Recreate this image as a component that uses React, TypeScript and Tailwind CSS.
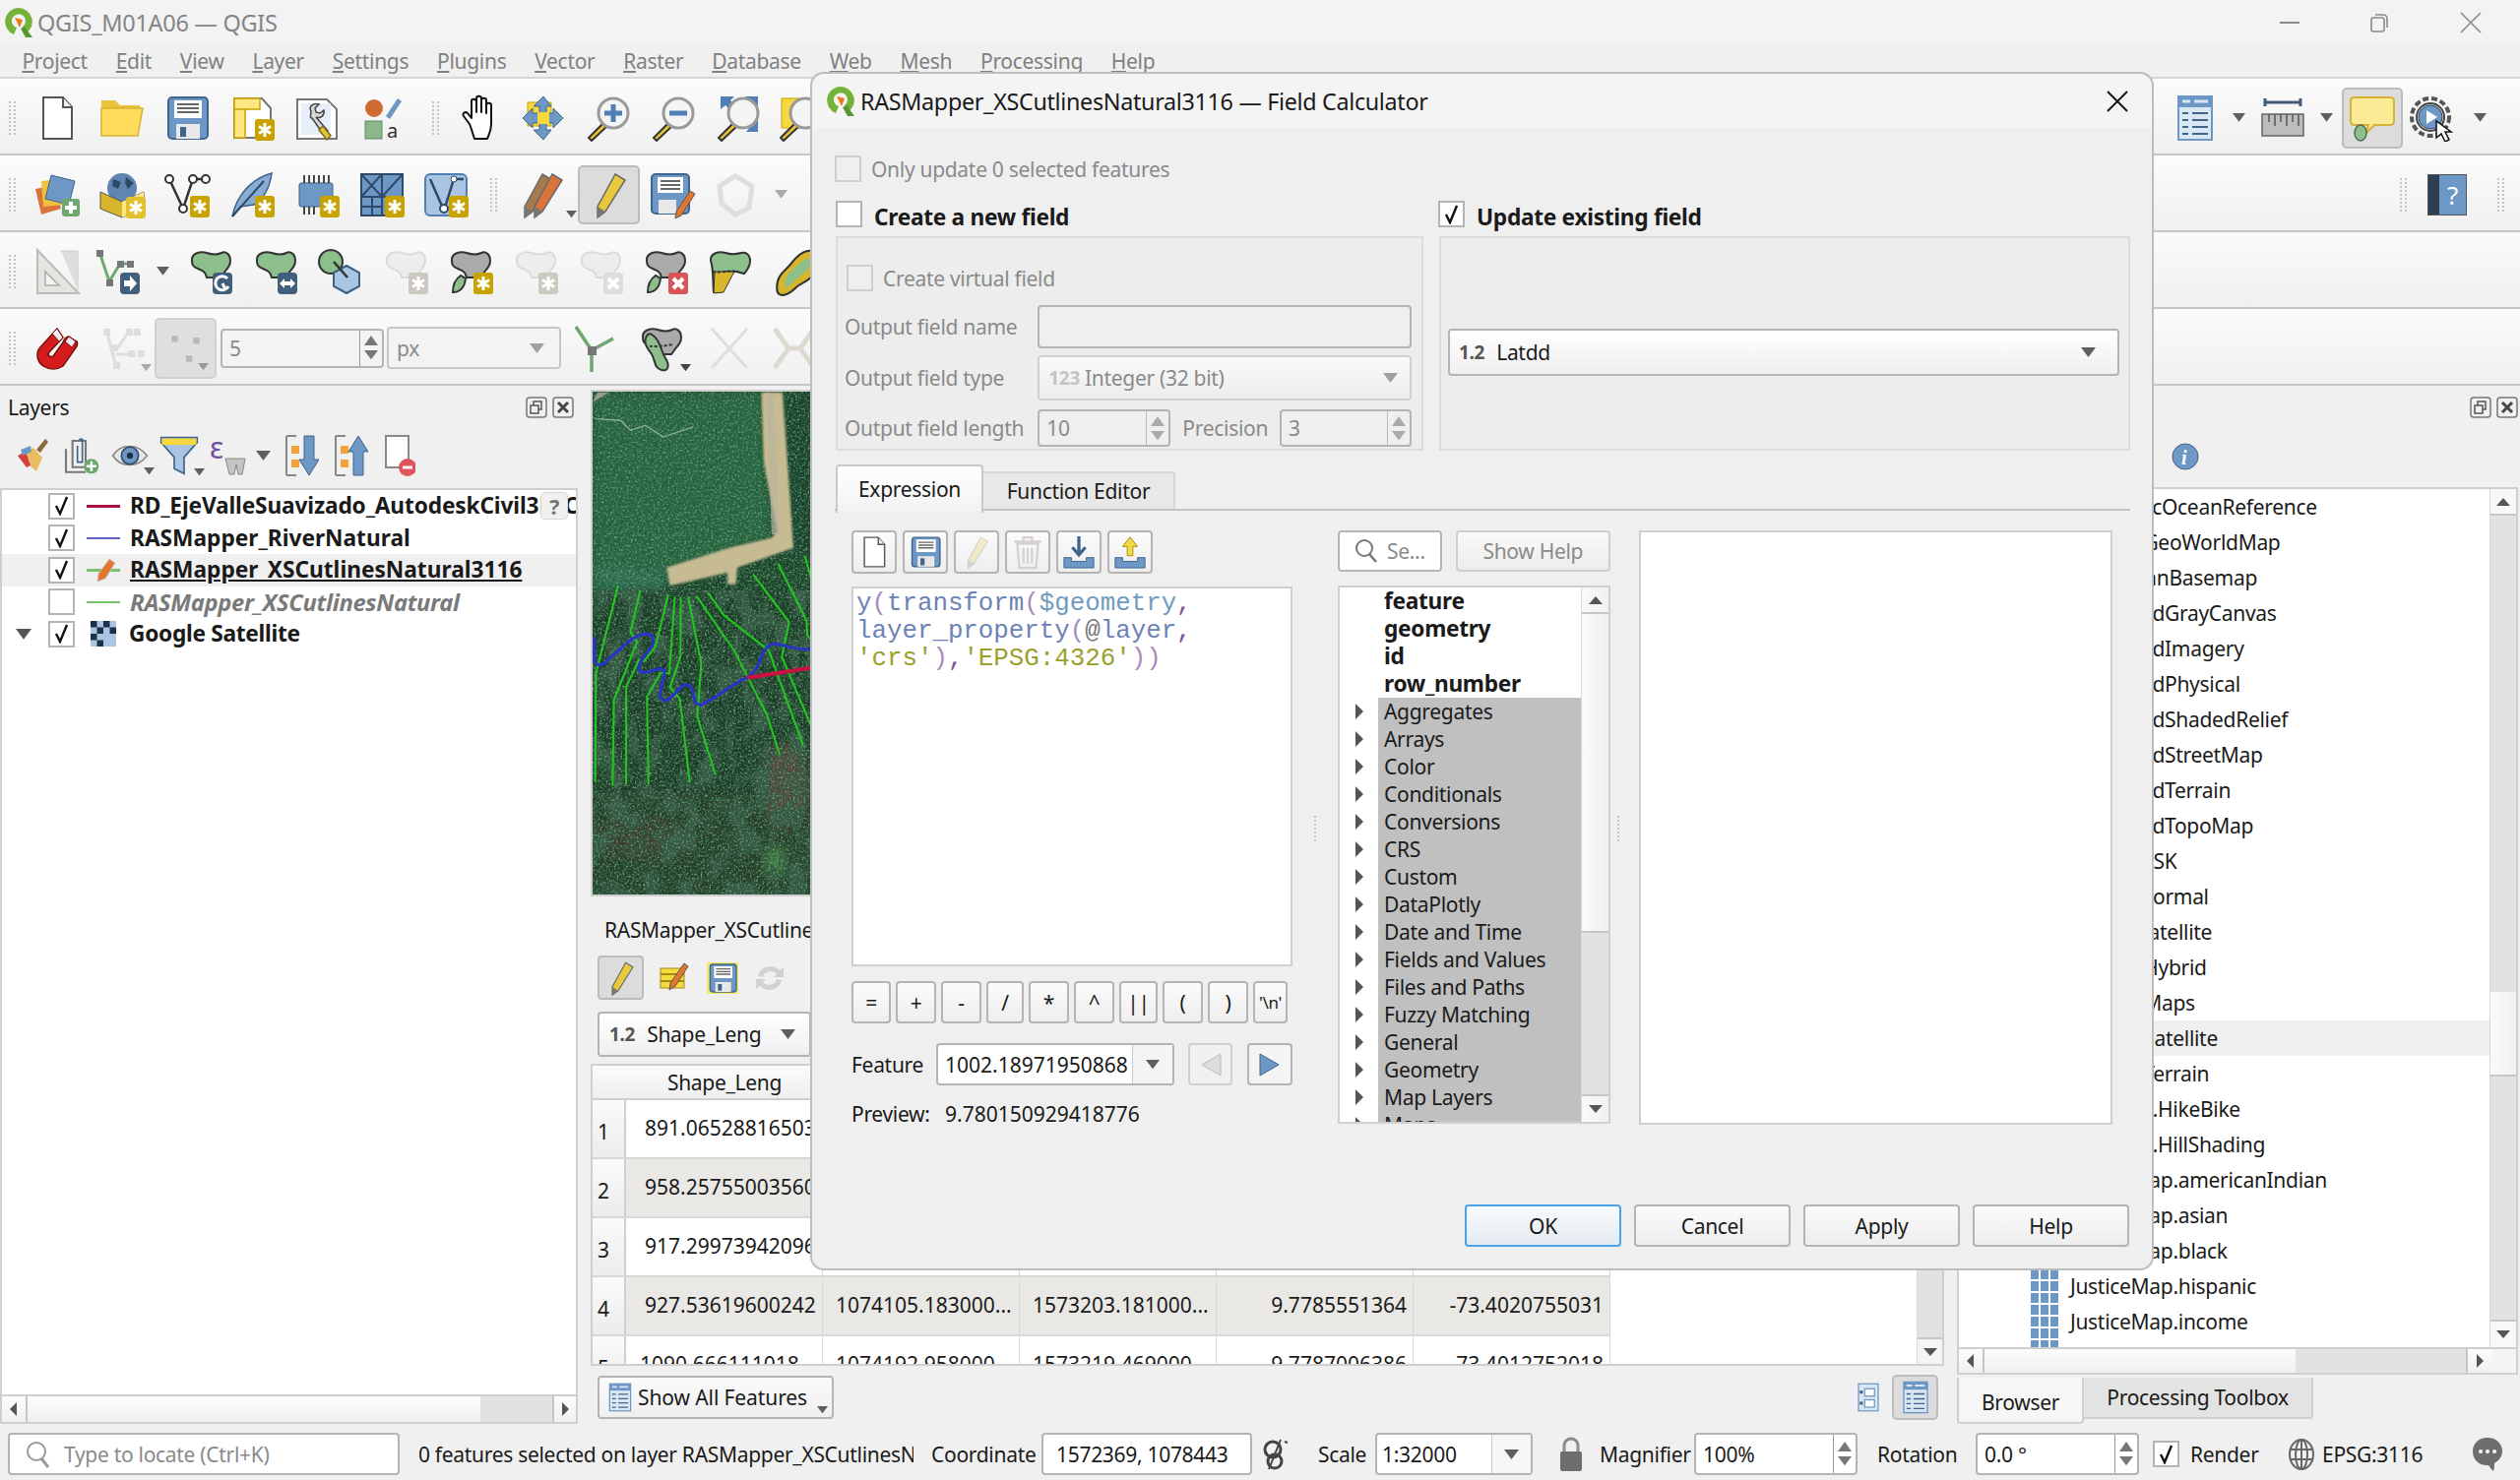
import React from "react";

// ---------- small drawing helpers ----------
const Ico = ({ children, size = 48, className = "" }: { children: React.ReactNode; size?: number; className?: string }) => (
  <svg viewBox="0 0 48 48" width={size} height={size} className={className}>
    {children}
  </svg>
);

const Caret = ({ c = "#5f5f5f", w = 13 }: { c?: string; w?: number }) => (
  <svg viewBox="0 0 12 8" width={w} height={(w * 8) / 12}>
    <path d="M0 0h12L6 8z" fill={c} />
  </svg>
);

const Star = ({ x = 27, y = 25, c = "#c8a200" }: { x?: number; y?: number; c?: string }) => (
  <g>
    <rect x={x} y={y} width="20" height="22" rx="3" fill={c} />
    <path
      d={`M${x + 10} ${y + 4}v14M${x + 4} ${y + 7.5}l12 7M${x + 16} ${y + 7.5}l-12 7`}
      stroke="#fff"
      strokeWidth="3"
    />
  </g>
);

const BLOB = "M5 13c-1-8 9-10 15-8s11 2 15 0 9 1 9 8-5 9-7 13l-3 4H20c-1-6-4-7-9-9s-6-4-6-8z";

const Blob = ({ fill = "#8dbf8d", stroke = "#333" }: { fill?: string; stroke?: string }) => (
  <path d={BLOB} fill={fill} stroke={stroke} strokeWidth="2" />
);

const DarkBadge = ({ c = "#3f5f7c", children }: { c?: string; children: React.ReactNode }) => (
  <g>
    <rect x="26" y="25" width="20" height="22" rx="4" fill={c} />
    {children}
  </g>
);

const IconNew = () => (
  <Ico>
    <path d="M10 3h20l9 10v32H10z" fill="#fff" stroke="#555" strokeWidth="2" />
    <path d="M30 3v10h9" fill="#eee" stroke="#555" strokeWidth="2" />
  </Ico>
);
const IconOpen = () => (
  <Ico>
    <path d="M3 6h14l5 5h20v6H3z" fill="#e8c23a" />
    <path d="M3 14h42l-5 28H3z" fill="#ffdc5c" stroke="#d6b236" strokeWidth="1.5" />
  </Ico>
);
const IconSave = ({ size = 48 }: { size?: number }) => (
  <Ico size={size}>
    <rect x="5" y="3" width="40" height="42" rx="4" fill="#6d97c4" stroke="#41648a" strokeWidth="2" />
    <rect x="11" y="6" width="28" height="18" fill="#fff" />
    <path d="M14 10h22M14 14h22M14 18h22" stroke="#666" strokeWidth="2" />
    <rect x="13" y="30" width="24" height="15" fill="#e8e8e8" />
    <rect x="17" y="33" width="6" height="10" fill="#41648a" />
  </Ico>
);
const IconPrint = () => (
  <Ico>
    <path d="M6 4h28l9 10v30H6z" fill="#fff" stroke="#777" strokeWidth="2" />
    <rect x="6" y="4" width="11" height="40" fill="#ffe680" stroke="#c8a200" strokeWidth="1.5" />
    <rect x="6" y="4" width="26" height="11" fill="#ffe680" stroke="#c8a200" strokeWidth="1.5" />
    <Star />
  </Ico>
);
const IconLayoutMgr = () => (
  <Ico>
    <path d="M4 5h30l10 10v30H4z" fill="#fff" stroke="#777" strokeWidth="2" />
    <rect x="8" y="9" width="30" height="32" fill="#e6effa" />
    <path d="M18 17c-3-5 3-9 8-7l-4 4 1 4 4 1 4-3c1 5-3 9-8 7l12 14-4 4-12-17c-3 0-1-3-1-7z" fill="#d8d8d8" stroke="#444" strokeWidth="1.5" />
    <path d="M30 32l8 10-4 4-8-10z" fill="#e3c33c" stroke="#806c10" strokeWidth="1.5" />
  </Ico>
);
const IconStyle = () => (
  <Ico>
    <circle cx="16" cy="14" r="9" fill="#cf6a34" />
    <path d="M28 22L40 4l4 3-12 18z" fill="#6d97c4" />
    <rect x="7" y="27" width="17" height="18" fill="#8bb78b" stroke="#5e8b5e" />
    <text x="29" y="44" fontSize="20" fill="#333" fontFamily="Noto Sans, sans-serif">
      a
    </text>
  </Ico>
);
const IconHand = () => (
  <Ico>
    <path
      d="M15 30L9 22c-2-3 2-5 4-3l4 5V7c0-3 4-3 5 0v11V4c0-3 5-3 5 0v14V6c0-3 5-3 5 0v13-8c0-3 5-3 5 0v19c0 7-2 10-4 15H20c-2-6-3-10-5-15z"
      fill="#fff"
      stroke="#111"
      strokeWidth="2"
      strokeLinejoin="round"
    />
  </Ico>
);
const IconPan = () => (
  <Ico>
    <rect x="8" y="8" width="24" height="24" fill="#f5d93f" stroke="#c8a200" />
    <path d="M24 2l8 10h-5v7h7v-5l10 10-10 10v-5h-7v7h5L24 46 14 36h6v-7h-7v5L3 24l10-10v5h7v-7h-6z" fill="#6d97c4" stroke="#41648a" />
    <rect x="18" y="18" width="12" height="12" fill="#f5d93f" />
  </Ico>
);
const Mag = ({ children }: { children?: React.ReactNode }) => (
  <>
    <path d="M19 29L4 44l3 3 15-14z" fill="#e8c23a" stroke="#333" strokeWidth="2" />
    <circle cx="29" cy="19" r="15" fill="#f4f4f4" stroke="#9a9a9a" strokeWidth="3" />
    {children}
  </>
);
const IconZoomIn = () => (
  <Ico>
    <Mag>
      <path d="M29 10v18M20 19h18" stroke="#4f7fb5" strokeWidth="5" />
    </Mag>
  </Ico>
);
const IconZoomOut = () => (
  <Ico>
    <Mag>
      <path d="M20 19h18" stroke="#4f7fb5" strokeWidth="5" />
    </Mag>
  </Ico>
);
const IconZoomFull = () => (
  <Ico>
    <path d="M6 2h14l-4 4 6 6-5 5-6-6-5 4zM44 2v14l-4-4-6 6-5-5 6-6-4-5zM44 38V24l-3 3-6-5-5 5 6 6-4 5z" fill="#4f7fb5" />
    <Mag />
  </Ico>
);
const IconZoomSel = () => (
  <Ico>
    <rect x="5" y="4" width="30" height="30" fill="#f5d93f" stroke="#c8a200" />
    <Mag />
  </Ico>
);

const IconAddLayers = () => (
  <Ico>
    <path d="M2 18l20-4 6 24-20 6z" fill="#d9743c" />
    <path d="M8 10l20-2 2 26-20 2z" fill="#f0c23c" />
    <path d="M18 4l24 6-6 24-24-6z" fill="#6d97c4" stroke="#41648a" />
    <rect x="29" y="28" width="18" height="18" rx="3" fill="#6ea86e" />
    <path d="M38 31v12M32 37h12" stroke="#fff" strokeWidth="4" />
  </Ico>
);
const IconGeoPkg = () => (
  <Ico>
    <circle cx="24" cy="17" r="15" fill="#5f86b0" />
    <path d="M15 8l8 3-3 7-6-3zM28 6l8 6-6 6-3-6z" fill="#2f4a68" />
    <path d="M2 21l22 10 22-10v17L24 47 2 38z" fill="#d8b62c" stroke="#555" />
    <path d="M24 31l22-10v17L24 47z" fill="#ffe680" />
    <Star x={28} y={26} c="#e2c12f" />
  </Ico>
);
const IconVector = () => (
  <Ico>
    <path d="M6 8l14 30L30 8h12" fill="none" stroke="#333" strokeWidth="2.5" />
    <circle cx="6" cy="8" r="4" fill="#fff" stroke="#333" strokeWidth="2" />
    <circle cx="20" cy="38" r="4" fill="#fff" stroke="#333" strokeWidth="2" />
    <circle cx="30" cy="8" r="4" fill="#fff" stroke="#333" strokeWidth="2" />
    <circle cx="43" cy="8" r="4" fill="#fff" stroke="#333" strokeWidth="2" />
    <Star />
  </Ico>
);
const IconFeather = () => (
  <Ico>
    <path d="M4 46C8 26 22 8 44 2c-2 14-8 26-18 32l-14 2z" fill="#88add4" stroke="#3d5f85" strokeWidth="1.5" />
    <path d="M4 46L36 10" stroke="#2f4a68" strokeWidth="2" />
    <Star />
  </Ico>
);
const IconChip = () => (
  <Ico>
    <rect x="6" y="12" width="34" height="24" rx="2" fill="#6d97c4" stroke="#3d5f85" />
    <path d="M11 4v8M16 4v8M21 4v8M26 4v8M31 4v8M36 4v8M11 36v8M16 36v8M21 36v8" stroke="#333" strokeWidth="1.8" />
    <Star />
  </Ico>
);
const IconMesh = () => (
  <Ico>
    <rect x="3" y="3" width="42" height="42" fill="#6d97c4" stroke="#2f4a68" strokeWidth="2" />
    <path d="M3 26h42M24 3v42M3 3l21 23M24 3L3 26M24 26l21-23M14 26v19M3 36h21" stroke="#2f4a68" strokeWidth="2" />
    <Star />
  </Ico>
);
const IconVBox = () => (
  <Ico>
    <rect x="3" y="3" width="42" height="42" rx="5" fill="#a9c5e3" stroke="#4f7fb5" strokeWidth="2" />
    <path d="M8 8l14 32L32 8h10" fill="none" stroke="#2f4a68" strokeWidth="2.5" />
    <circle cx="22" cy="38" r="4" fill="#fff" stroke="#2f4a68" strokeWidth="2" />
    <circle cx="32" cy="8" r="3" fill="#fff" stroke="#2f4a68" />
    <Star />
  </Ico>
);
const PencilShape = ({ c = "#e8c83c", tx = 0 }: { c?: string; tx?: number }) => (
  <g transform={`translate(${tx} 0)`}>
    <path d="M30 3l10 6-20 32-8 6 0-11z" fill={c} stroke="#6a6a6a" strokeWidth="1.5" />
    <path d="M12 36l8 5-8 6z" fill="#777" />
  </g>
);
const IconPencils = () => (
  <Ico>
    <PencilShape c="#a67a4f" tx={-8} />
    <PencilShape c="#d9743c" tx={2} />
  </Ico>
);
const IconPencil = ({ size = 48 }: { size?: number }) => (
  <Ico size={size}>
    <PencilShape />
  </Ico>
);
const IconSaveEdit = () => (
  <Ico>
    <rect x="3" y="3" width="38" height="40" rx="4" fill="#6d97c4" stroke="#41648a" strokeWidth="2" />
    <rect x="9" y="6" width="26" height="16" fill="#fff" />
    <path d="M12 10h20M12 14h20M12 18h20" stroke="#666" strokeWidth="2" />
    <rect x="10" y="29" width="18" height="14" fill="#e8e8e8" />
    <path d="M42 20l5 3-14 22-6 3 1-7z" fill="#e2762e" stroke="#555" />
  </Ico>
);
const IconPolyOff = () => (
  <Ico>
    <path d="M24 5l17 10-3 22-14 7-14-11-2-18z" fill="none" stroke="#dedede" strokeWidth="5" />
  </Ico>
);
const IconRuler = () => (
  <Ico>
    <path d="M4 2l42 44H4z" fill="#e6e4df" stroke="#bbb" strokeWidth="2" />
    <path d="M12 24l14 14H12z" fill="#f4f4f4" stroke="#aaa" strokeWidth="1.5" />
    <path d="M28 3h17v40" fill="#ddd" stroke="#ccc" />
  </Ico>
);
const IconVertex = () => (
  <Ico>
    <path d="M5 4l10 30L26 16h14" fill="none" stroke="#6ea86e" strokeWidth="3" />
    <rect x="2" y="2" width="7" height="7" fill="#777" />
    <rect x="12" y="32" width="7" height="7" fill="#777" />
    <rect x="23" y="13" width="7" height="7" fill="#777" />
    <rect x="33" y="13" width="7" height="7" fill="#777" />
    <DarkBadge>
      <path d="M30 33h6v-5l7 8-7 8v-5h-6z" fill="#fff" />
    </DarkBadge>
  </Ico>
);
const IconRotate = () => (
  <Ico>
    <Blob />
    <DarkBadge>
      <path d="M41 31a7 7 0 1 0 1 8M36 36l3 6" fill="none" stroke="#fff" strokeWidth="3" />
    </DarkBadge>
  </Ico>
);
const IconScale = () => (
  <Ico>
    <Blob />
    <DarkBadge>
      <path d="M28 36l5-5v3h6v-3l5 5-5 5v-3h-6v3z" fill="#fff" />
    </DarkBadge>
  </Ico>
);
const IconOffset = () => (
  <Ico>
    <circle cx="14" cy="14" r="12" fill="#8dbf8d" stroke="#333" strokeWidth="2" />
    <path d="M30 18l13 7v14l-13 7-13-7V25z" fill="#a9c5e3" stroke="#3d5f85" strokeWidth="2" />
    <path d="M17 14l14 16" stroke="#333" strokeWidth="2.5" />
  </Ico>
);
const IconFill = ({ off }: { off?: boolean }) => (
  <Ico>
    <g opacity={off ? 0.35 : 1}>
      <path d={BLOB} fill={off ? "#ddd" : "#aaa"} stroke={off ? "#aaa" : "#333"} strokeWidth="2" />
      {!off && <path d="M14 28c-6 4-8 10-8 17 8 0 12-6 13-14z" fill="#8dbf8d" stroke="#333" strokeWidth="2" />}
    </g>
    <Star x={27} y={25} c={off ? "#ccc9c0" : "#c8a200"} />
  </Ico>
);
const IconDelOff = ({ off }: { off?: boolean }) => (
  <Ico>
    <g opacity={off ? 0.35 : 1}>
      <path d={BLOB} fill={off ? "#ddd" : "#aaa"} stroke={off ? "#aaa" : "#333"} strokeWidth="2" />
      {!off && <path d="M14 28c-6 4-8 10-8 17 8 0 12-6 13-14z" fill="#8dbf8d" stroke="#333" strokeWidth="2" />}
    </g>
    <rect x="27" y="25" width="20" height="22" rx="3" fill={off ? "#ddd" : "#d9535b"} />
    <path d="M32 31l10 10M42 31L32 41" stroke="#fff" strokeWidth="4" />
  </Ico>
);
const IconSplit = () => (
  <Ico>
    <path d="M4 13c-1-8 9-10 15-8s12 1 16 0 9 1 9 8-4 10-6 13l-8-2H20l-3 12-4 9H7c-1-10 0-24-3-32z" fill="#8dbf8d" stroke="#333" strokeWidth="2" />
    <path d="M8 24h20l-11 21-10 1z" fill="#d8b62c" stroke="#333" strokeWidth="1" />
    <path d="M6 24c8 2 16-2 26 0" stroke="#333" strokeWidth="2" strokeDasharray="3 2" fill="none" />
  </Ico>
);
const IconRing = () => (
  <Ico size={50}>
    <path d="M6 40c0-14 8-16 14-24s14-14 22-12 4 14 0 22-12 8-18 14-18 12-18 0z" fill="#d8b62c" stroke="#333" strokeWidth="2" />
    <path d="M14 36c0-10 6-12 12-18s10-8 12-6 0 8-4 12-8 6-12 10-8 8-8 2z" fill="#8dbf8d" />
  </Ico>
);
const IconMagnet = () => (
  <Ico>
    <path d="M24 4L6 24c-4 6-2 14 4 18s14 4 20 0l14-20c2-6-2-6-2-6l-6-4c-4 0-6 6-6 6L20 32c-4 2-6-2-4-4l14-15-6-9z" fill="#d41c1c" stroke="#7a0f0f" strokeWidth="1.5" />
    <path d="M24 4l6 9-4 4-7-8zM36 12l7 5-4 6-7-6z" fill="#eee" stroke="#7a0f0f" />
  </Ico>
);
const IconTraceOff = () => (
  <Ico>
    <g fill="none" stroke="#dedede" strokeWidth="3">
      <path d="M8 6l10 36M18 26L30 8M18 30h20" />
    </g>
    <g fill="#dedede">
      <rect x="5" y="4" width="7" height="7" />
      <rect x="12" y="20" width="7" height="7" />
      <rect x="28" y="4" width="7" height="7" />
      <rect x="36" y="4" width="7" height="7" />
      <rect x="30" y="26" width="7" height="7" />
      <rect x="40" y="26" width="7" height="7" />
      <rect x="15" y="38" width="7" height="7" />
    </g>
  </Ico>
);
const IconSnapOff = () => (
  <Ico size={44}>
    <g fill="#b9b9b9">
      <rect x="8" y="10" width="7" height="7" />
      <rect x="32" y="12" width="7" height="7" />
      <rect x="24" y="32" width="7" height="7" />
    </g>
  </Ico>
);
const IconTripleLine = () => (
  <Ico>
    <path d="M24 26L8 2M24 26l22-12M24 26v22" stroke="#6ea86e" strokeWidth="3.5" fill="none" />
    <rect x="20" y="22" width="9" height="9" fill="#777" />
  </Ico>
);
const IconReshape = () => (
  <Ico>
    <path d={BLOB} fill="#aaa" stroke="#333" strokeWidth="2" />
    <path d="M10 10c-6 8 0 14 4 20s2 14 10 16 8-6 4-12-4-12-8-18-8-8-10-6z" fill="#8dbf8d" stroke="#333" strokeWidth="2" />
    <path d="M12 22c6 0 14 0 24-2" stroke="#333" strokeWidth="2" strokeDasharray="3 2" fill="none" />
  </Ico>
);
const IconCrossOff = () => (
  <Ico>
    <path d="M6 4l36 40M42 4L6 44" stroke="#dedede" strokeWidth="3" />
  </Ico>
);
const IconMergeOff = () => (
  <Ico>
    <path d="M4 4l14 20L4 44M44 4L30 24l14 20M18 24h12" stroke="#dcdad0" strokeWidth="5" fill="none" />
  </Ico>
);
const IconTableView = ({ size = 48 }: { size?: number }) => (
  <Ico size={size}>
    <rect x="7" y="2" width="34" height="44" fill="#d9e6f3" stroke="#6d97c4" strokeWidth="2" />
    <rect x="7" y="2" width="34" height="11" fill="#6d97c4" />
    <path d="M11 7h8M23 7h14" stroke="#d9e6f3" strokeWidth="3" />
    <path d="M11 19h6M21 19h16M11 26h6M21 26h16M11 33h6M21 33h16M11 40h6M21 40h16" stroke="#41648a" strokeWidth="2" />
  </Ico>
);
const IconMeasure = () => (
  <Ico>
    <path d="M6 8h36M6 4v8M42 4v8" stroke="#415a75" strokeWidth="3" />
    <rect x="3" y="20" width="42" height="22" fill="#bdbdbd" stroke="#666" strokeWidth="1.5" />
    <path d="M10 20v8M16 20v12M22 20v8M28 20v12M34 20v8M40 20v12" stroke="#555" strokeWidth="1.5" />
  </Ico>
);
const IconBubble = () => (
  <Ico>
    <path d="M6 3h36c3 0 4 2 4 4v20c0 3-2 4-4 4H26l-8 8 2-8H6c-3 0-4-2-4-4V7c0-2 1-4 4-4z" fill="#fbeb96" stroke="#d6b236" strokeWidth="2" />
    <ellipse cx="12" cy="39" rx="6" ry="8" fill="#8dbf8d" stroke="#4b6b4b" strokeWidth="1.5" />
  </Ico>
);
const IconGear = () => (
  <Ico>
    <circle cx="21" cy="23" r="19" fill="none" stroke="#555" strokeWidth="4" strokeDasharray="6 3" />
    <circle cx="21" cy="23" r="14" fill="#e6e6e6" stroke="#444" strokeWidth="2" />
    <circle cx="21" cy="23" r="12" fill="#6d97c4" stroke="#2f4a68" />
    <path d="M17 16l11 7-11 7z" fill="#fff" />
    <path d="M27 27l0 17 5-4 4 8 4-2-4-8h6z" fill="#fff" stroke="#111" strokeWidth="1.5" />
  </Ico>
);
const IconHelp = () => (
  <div className="flex h-[42px] w-[40px] border border-[#555] bg-[#6d97c4]">
    <div className="h-full w-[11px] bg-[#2f3f52]" />
    <div className="flex-1 text-center text-[26px] leading-[40px] text-white">?</div>
  </div>
);

const FloatClose = () => (
  <div className="flex items-center gap-[5px]">
    <svg width="22" height="22" viewBox="0 0 22 22">
      <rect x="1" y="1" width="20" height="20" rx="3" fill="none" stroke="#777" strokeWidth="1.5" />
      <rect x="8" y="5" width="8" height="8" fill="none" stroke="#555" strokeWidth="1.5" />
      <rect x="5" y="9" width="8" height="8" fill="#f0f0f0" stroke="#555" strokeWidth="1.5" />
    </svg>
    <svg width="22" height="22" viewBox="0 0 22 22">
      <rect x="1" y="1" width="20" height="20" rx="3" fill="none" stroke="#777" strokeWidth="1.5" />
      <path d="M6 6l10 10M16 6L6 16" stroke="#444" strokeWidth="3" />
    </svg>
  </div>
);

const Handle = ({ className = "" }: { className?: string }) => (
  <div className={`flex shrink-0 items-center justify-center ${className}`}>
    <div className="h-[34px] w-[7px] border-x-2 border-dotted border-[#c4c4c4]" />
  </div>
);

const Slot = ({ w = "w-[66px]", children }: { w?: string; children?: React.ReactNode }) => (
  <div className={`flex shrink-0 items-center justify-center ${w}`}>{children}</div>
);

const CheckBox = ({ on, off }: { on?: boolean; off?: boolean }) => (
  <div
    className={`flex h-[27px] w-[27px] shrink-0 items-center justify-center border-2 ${
      off ? "border-[#cfcfcf] bg-[#efefef]" : "border-[#b4b4b4] bg-white"
    }`}
  >
    {on && (
      <svg width="18" height="20" viewBox="0 0 18 20">
        <path d="M3 10l4 8L14 1" fill="none" stroke="#111" strokeWidth="2.4" />
      </svg>
    )}
  </div>
);

const SpinArrows = ({ off }: { off?: boolean }) => (
  <div className={`flex h-full w-[23px] shrink-0 flex-col items-center justify-center gap-[5px] border-l ${off ? "border-[#bbb]" : "border-[#999]"}`}>
    <svg width="14" height="10" viewBox="0 0 14 10">
      <path d="M7 0l7 10H0z" fill={off ? "#aaa" : "#777"} />
    </svg>
    <Caret c={off ? "#aaa" : "#777"} w={14} />
  </div>
);

const Spin = ({ value, w, h = "h-[40px]", off, grey }: { value: string; w: string; h?: string; off?: boolean; grey?: boolean }) => (
  <div
    className={`flex ${w} ${h} shrink-0 items-center rounded-[4px] border-2 border-[#b4b4b4] ${
      off ? "bg-[#efefef] text-[#8a8a8a]" : grey ? "bg-[#f3f3f3]" : "bg-white"
    }`}
  >
    <span className="flex-1 overflow-hidden whitespace-nowrap pl-[7px]">{value}</span>
    <SpinArrows off={off} />
  </div>
);

const Btn = ({ label, className = "" }: { label: string; className?: string }) => (
  <div
    className={`flex h-[43px] w-[159px] items-center justify-center rounded-[4px] border-2 border-[#b4b4b4] bg-gradient-to-b from-[#fbfbfb] to-[#ededed] ${className}`}
  >
    {label}
  </div>
);

const ScrollBtn = ({ dir, className = "" }: { dir: "u" | "d" | "l" | "r"; className?: string }) => (
  <div className={`flex shrink-0 items-center justify-center ${className}`}>
    <svg width="16" height="16" viewBox="0 0 16 16">
      {dir === "u" && <path d="M8 4l7 8H1z" fill="#555" />}
      {dir === "d" && <path d="M8 12L1 4h14z" fill="#555" />}
      {dir === "l" && <path d="M4 8l7-7v14z" fill="#555" />}
      {dir === "r" && <path d="M12 8L5 1v14z" fill="#555" />}
    </svg>
  </div>
);

const Splitter = ({ w }: { w: string }) => (
  <div className={`flex shrink-0 items-center justify-center self-stretch ${w}`}>
    <div className="h-[26px] w-0 border-l-2 border-dotted border-[#c4c4c4]" />
  </div>
);

// ---------- satellite map ----------
const GREEN_LINES = [
  "92,605 25,870 23,1198",
  "160,618 130,745 150,775 80,950 76,1210",
  "245,632 205,790 170,835",
  "158,825 117,910 117,1205",
  "265,638 248,870 222,868 180,940 185,1205",
  "283,638 282,820 250,912 280,945 310,1198",
  "305,638 345,840 333,1000 388,1175",
  "330,635 445,800 545,995 583,1115",
  "365,625 415,695 550,800 655,1088",
  "503,570 612,715 590,820 684,1040",
  "578,537 665,710 668,755 684,775",
  "660,515 684,600",
];

const SatelliteMap = () => (
  <svg viewBox="15 18 670 1520" preserveAspectRatio="none" className="h-full w-[224px] shrink-0">
    <defs>
      <filter id="grainDark" x="0" y="0" width="100%" height="100%">
        <feTurbulence type="fractalNoise" baseFrequency="0.14 0.09" numOctaves="3" seed="7" />
        <feColorMatrix values="0 0 0 0 0.02  0 0 0 0 0.1  0 0 0 0 0.05  4 0 0 0 -1.9" />
      </filter>
      <filter id="grainLight" x="0" y="0" width="100%" height="100%">
        <feTurbulence type="fractalNoise" baseFrequency="0.16" numOctaves="3" seed="21" />
        <feColorMatrix values="0 0 0 0 0.16  0 0 0 0 0.34  0 0 0 0 0.2  0 3 0 0 -1.5" />
      </filter>
      <filter id="blotch" x="0" y="0" width="100%" height="100%">
        <feTurbulence type="fractalNoise" baseFrequency="0.018 0.012" numOctaves="3" seed="4" />
        <feColorMatrix values="0 0 0 0 0.04  0 0 0 0 0.1  0 0 0 0 0.06  5 0 0 0 -2.3" />
      </filter>
      <filter id="soft">
        <feGaussianBlur stdDeviation="14" />
      </filter>
      <filter id="edge">
        <feGaussianBlur stdDeviation="3" />
      </filter>
    </defs>
    <rect x="15" y="18" width="670" height="1520" fill="#1c4429" />
    <path d="M15 18H528L560 460 230 570 15 590z" fill="#26683f" filter="url(#soft)" />
    <path d="M15 540L240 560 240 620 60 690 15 680z" fill="#2f7255" filter="url(#soft)" />
    <path d="M600 18h85v500h-60z" fill="#17402a" filter="url(#soft)" />
    <rect x="15" y="620" width="670" height="640" fill="#1b3b25" filter="url(#soft)" />
    <rect x="15" y="1220" width="670" height="320" fill="#263d27" filter="url(#soft)" />
    <ellipse cx="600" cy="1210" rx="70" ry="130" fill="#54483a" filter="url(#soft)" />
    <ellipse cx="170" cy="1370" rx="160" ry="60" fill="#3a3b2b" filter="url(#soft)" />
    <ellipse cx="570" cy="1440" rx="36" ry="50" fill="#437c43" filter="url(#soft)" />
    <rect x="15" y="620" width="670" height="920" filter="url(#blotch)" />
    <rect x="15" y="18" width="670" height="1520" filter="url(#grainDark)" />
    <rect x="15" y="18" width="670" height="1520" filter="url(#grainLight)" />
    <path
      d="M528 20L592 20 612 300 625 490 455 550 450 600 425 600 425 565 250 605 240 550 430 490 560 460 575 440 535 230z"
      fill="#c6bb92"
      filter="url(#edge)"
    />
    <path d="M555 30l15 420" stroke="#b9b3a0" strokeWidth="22" opacity=".7" fill="none" />
    <polyline points="25,100 100,105 130,135 175,120 230,155 320,125" fill="none" stroke="#b6cfae" strokeWidth="4" opacity=".7" />
    <path d="M15 50l50-30H30z" fill="#9a9a90" />
    {GREEN_LINES.map((p) => (
      <polyline key={p} points={p} fill="none" stroke="#22c81e" strokeWidth="6" />
    ))}
    <path
      d="M20 760V830C30 855 50 845 70 820 110 790 140 750 180 750 205 755 205 780 185 800 160 830 150 850 160 865 185 875 215 845 232 860 240 880 200 950 235 952 265 945 280 895 310 905 330 930 315 965 345 965 400 940 440 900 485 882 530 860 520 790 565 780 600 780 640 805 684 795"
      fill="none"
      stroke="#2a33c8"
      strokeWidth="9"
    />
    <path d="M485 883L684 852" stroke="#cc1040" strokeWidth="12" />
  </svg>
);

// ---------- data ----------
const LAYERS = [
  { name: "RD_EjeValleSuavizado_AutodeskCivil3D_Civil3D", color: "#a5103c", checked: true, cls: "text-[22.7px] font-bold tracking-[-0.15px]", badge: true },
  { name: "RASMapper_RiverNatural", color: "#5a5fc8", checked: true, cls: "text-[22.7px] font-bold tracking-normal" },
  { name: "RASMapper_XSCutlinesNatural3116", color: "#78c26e", checked: true, cls: "text-[22.7px] font-bold tracking-normal underline", active: true },
  { name: "RASMapper_XSCutlinesNatural", color: "#78c26e", checked: false, cls: "text-[23.7px] font-bold italic text-[#7a7a7a]" },
];

const TABLE_ROWS = [
  ["1", "891.06528816503", "1074011.129000", "1573100.210000", "9.7775551364", "-73.4030755031"],
  ["2", "958.25755003560", "1074032.330000", "1573132.841000", "9.7778551364", "-73.4028755031"],
  ["3", "917.29973942096", "1074068.420000", "1573171.005000", "9.7782551364", "-73.4024755031"],
  ["4", "927.53619600242", "1074105.183000...", "1573203.181000...", "9.7785551364", "-73.4020755031"],
  ["5", "1090.666111018", "1074192.958000", "1573219.469000", "9.7787006386", "-73.4012752018"],
];

const FN_TOP = ["feature", "geometry", "id", "row_number"];
const FN_GROUPS = [
  "Aggregates",
  "Arrays",
  "Color",
  "Conditionals",
  "Conversions",
  "CRS",
  "Custom",
  "DataPlotly",
  "Date and Time",
  "Fields and Values",
  "Files and Paths",
  "Fuzzy Matching",
  "General",
  "Geometry",
  "Map Layers",
  "Maps",
];

const BROWSER_ROWS = [
  "Esri.ArcticOceanReference",
  "Esri.NatGeoWorldMap",
  "Esri.OceanBasemap",
  "Esri.WorldGrayCanvas",
  "Esri.WorldImagery",
  "Esri.WorldPhysical",
  "Esri.WorldShadedRelief",
  "Esri.WorldStreetMap",
  "Esri.WorldTerrain",
  "Esri.WorldTopoMap",
  "FreeMapSK",
  "Gaode.Normal",
  "Gaode.Satellite",
  "Google Hybrid",
  "Google Maps",
  "Google Satellite",
  "Google Terrain",
  "HikeBike.HikeBike",
  "HikeBike.HillShading",
  "JusticeMap.americanIndian",
  "JusticeMap.asian",
  "JusticeMap.black",
  "JusticeMap.hispanic",
  "JusticeMap.income",
  "JusticeMap.multi",
];

const MENUS = ["Project", "Edit", "View", "Layer", "Settings", "Plugins", "Vector", "Raster", "Database", "Web", "Mesh", "Processing", "Help"];

const toolbarCls =
  "flex h-[78px] shrink-0 items-center border-b-2 border-[#c6c6c6] bg-gradient-to-b from-[#fbfbfb] to-[#f0f0f0] pt-[3px]";

const GridTile = () => (
  <svg width="28" height="36" viewBox="0 0 28 36">
    {[0, 1, 2].map((r) =>
      [0, 1, 2].map((c) => <rect key={`${r}${c}`} x={c * 10} y={r * 12 + 1} width="8" height="10" fill="#6d97c4" />),
    )}
  </svg>
);

// ---------- field calculator dialog ----------
const FieldCalculator = () => (
  <div className="absolute left-[823px] top-[73px] flex h-[1218px] w-[1365px] flex-col rounded-[14px] border-2 border-[#bdbdbd] bg-[#efefef] text-[#1a1a1a]">
    <div className="flex h-[55px] shrink-0 items-center rounded-t-[14px] bg-[#f4f4f4] pl-[13px] pr-[24px]">
      <QgisLogo />
      <span className="ml-[4px] flex-1 text-[23.3px]">RASMapper_XSCutlinesNatural3116 — Field Calculator</span>
      <svg width="22" height="22" viewBox="0 0 22 22">
        <path d="M1 1l20 20M21 1L1 21" stroke="#111" strokeWidth="1.8" />
      </svg>
    </div>
    <div className="flex flex-col pl-[23px] pr-[22px]">
      <div className="mt-[28px] flex items-center text-[#8a8a8a]">
        <CheckBox off />
        <span className="ml-[10px]">Only update 0 selected features</span>
      </div>
      <div className="mt-[19px] flex items-center text-[22.7px] font-bold">
        <div className="flex w-[613px] items-center pl-[1px]">
          <CheckBox />
          <span className="ml-[12px] translate-y-[3px]">Create a new field</span>
        </div>
        <CheckBox on />
        <span className="ml-[12px] translate-y-[3px]">Update existing field</span>
      </div>
      <div className="mt-[9px] flex gap-[16px] pl-[1px]">
        <div className="flex h-[218px] w-[597px] flex-col border-2 border-[#dcdcdc] bg-[#ededed] pl-[7px] pr-[10px] text-[#8a8a8a]">
          <div className="mt-[27px] flex items-center pl-[2px]">
            <CheckBox off />
            <span className="ml-[10px]">Create virtual field</span>
          </div>
          <div className="mt-[14px] flex items-center">
            <span className="w-[197px]">Output field name</span>
            <div className="h-[44px] w-[381px] rounded-[4px] border-2 border-[#b4b4b4] bg-[#efefef]" />
          </div>
          <div className="mt-[7px] flex items-center">
            <span className="w-[197px]">Output field type</span>
            <div className="flex h-[46px] w-[381px] items-center rounded-[4px] border-2 border-[#cfcfcf] bg-gradient-to-b from-[#fafafa] to-[#ececec] pl-[9px] pr-[12px]">
              <span className="text-[19px] font-bold text-[#c4c4c4]">123</span>
              <span className="ml-[5px] flex-1">Integer (32 bit)</span>
              <Caret c="#a0a0a0" w={15} />
            </div>
          </div>
          <div className="mt-[9px] flex items-center">
            <span className="w-[197px]">Output field length</span>
            <Spin value="10" w="w-[135px]" h="h-[38px]" off />
            <span className="ml-[12px] w-[99px]">Precision</span>
            <Spin value="3" w="w-[134px]" h="h-[38px]" off />
          </div>
        </div>
        <div className="flex h-[218px] w-[702px] items-center border-2 border-[#dcdcdc] bg-[#ededed] pl-[7px] pr-[9px] pt-[18px]">
          <div className="flex h-[48px] w-full items-center rounded-[4px] border-2 border-[#b4b4b4] bg-gradient-to-b from-white to-[#efefef] pl-[9px] pr-[22px]">
            <span className="text-[19px] font-bold text-[#555]">1.2</span>
            <span className="ml-[12px] flex-1">Latdd</span>
            <Caret w={15} />
          </div>
        </div>
      </div>
      <div className="mt-[14px] flex h-[47px] items-end border-b-2 border-[#c4c4c4] pl-[1px]">
        <div className="-mb-[4px] flex h-[49px] w-[150px] items-center justify-center rounded-t-[4px] border-x-2 border-t-2 border-[#c9c9c9] bg-gradient-to-b from-white to-[#f2f2f2] pb-[2px]">
          Expression
        </div>
        <div className="flex h-[38px] w-[195px] items-center justify-center rounded-tr-[4px] border-r-2 border-t-2 border-[#d6d6d6] bg-[#e8e8e8]">
          Function Editor
        </div>
      </div>
    </div>
    <div className="mt-[20px] flex pl-[40px]">
      <div className="flex w-[448px] flex-col">
        <div className="flex gap-[6px]">
          {[
            <IconNew key="n" />,
            <IconSave key="s" />,
            <div key="e" className="opacity-25">
              <IconPencil />
            </div>,
            <svg key="t" width="30" height="32" viewBox="0 0 30 32">
              <path d="M5 8h20l-2 23H7zM2 6h26M11 6V2h8v4M11 12v15M15 12v15M19 12v15" fill="none" stroke="#d5cfcf" strokeWidth="2" />
            </svg>,
            <svg key="d" width="34" height="36" viewBox="0 0 34 36">
              <path d="M17 1v18M10 13l7 8 7-8" fill="none" stroke="#41648a" strokeWidth="3.5" />
              <path d="M1 24h8v4h16v-4h8v11H1z" fill="#6d97c4" stroke="#41648a" />
            </svg>,
            <svg key="u" width="34" height="36" viewBox="0 0 34 36">
              <path d="M17 2l8 10h-5v10h-6V12H9z" fill="#f5d93f" stroke="#a08a10" />
              <path d="M1 24h8v4h16v-4h8v11H1z" fill="#6d97c4" stroke="#41648a" />
            </svg>,
          ].map((ic, i) => (
            <div
              key={i}
              className="flex h-[44px] w-[46px] items-center justify-center rounded-[4px] border-2 border-[#b4b4b4] bg-gradient-to-b from-[#fbfbfb] to-[#eeeeee] [&_svg]:h-[34px] [&_svg]:w-[34px]"
            >
              {ic}
            </div>
          ))}
        </div>
        <div className="mt-[13px] h-[386px] border-2 border-[#cfcfcf] bg-white pl-[3px] pt-[2px] font-['Liberation_Mono',monospace] text-[25.8px] leading-[28px] tracking-normal">
          <div>
            <span className="text-[#6d82b5]">y</span>
            <span className="text-[#a68ac0]">(</span>
            <span className="text-[#6d82b5]">transform</span>
            <span className="text-[#a68ac0]">(</span>
            <span className="text-[#6f9bc0]">$geometry</span>
            <span className="text-[#8050a0]">,</span>
          </div>
          <div>
            <span className="text-[#6d82b5]">layer_property</span>
            <span className="text-[#a68ac0]">(</span>
            <span className="text-[#777]">@</span>
            <span className="text-[#6d82b5]">layer</span>
            <span className="text-[#8050a0]">,</span>
          </div>
          <div>
            <span className="text-[#9aa02c]">'crs'</span>
            <span className="text-[#a68ac0]">)</span>
            <span className="text-[#8050a0]">,</span>
            <span className="text-[#9aa02c]">'EPSG:4326'</span>
            <span className="text-[#a68ac0]">))</span>
          </div>
        </div>
        <div className="mt-[15px] flex gap-[5px]">
          {[
            ["=", "w-[40px]"],
            ["+", "w-[41px]"],
            ["-", "w-[41px]"],
            ["/", "w-[38px]"],
            ["*", "w-[41px]"],
            ["^", "w-[41px]"],
            ["||", "w-[39px]"],
            ["(", "w-[41px]"],
            [")", "w-[41px]"],
            ["'\\n'", "w-[35px] text-[17px]"],
          ].map(([t, w]) => (
            <div
              key={t}
              className={`flex h-[43px] ${w} items-center justify-center whitespace-nowrap rounded-[4px] border-2 border-[#b4b4b4] bg-gradient-to-b from-[#fbfbfb] to-[#eeeeee]`}
            >
              {t}
            </div>
          ))}
        </div>
        <div className="mt-[20px] flex h-[43px] items-center">
          <span className="w-[86px]">Feature</span>
          <div className="flex h-[43px] w-[242px] items-center rounded-[4px] border-2 border-[#b4b4b4] bg-white">
            <span className="w-[197px] overflow-hidden whitespace-nowrap pl-[7px] tracking-normal">1002.18971950868</span>
            <div className="flex h-full flex-1 items-center justify-center border-l border-[#ccc] bg-[#f4f4f4]">
              <Caret w={14} />
            </div>
          </div>
          <div className="ml-[14px] flex h-[43px] w-[45px] items-center justify-center rounded-[4px] border-2 border-[#cfcfcf] bg-[#f0f0f0]">
            <svg width="22" height="24" viewBox="0 0 22 24">
              <path d="M21 1v22L2 12z" fill="#dcdcdc" stroke="#bbb" />
            </svg>
          </div>
          <div className="ml-[15px] flex h-[43px] w-[46px] items-center justify-center rounded-[4px] border-2 border-[#b4b4b4] bg-[#f4f4f4]">
            <svg width="22" height="24" viewBox="0 0 22 24">
              <path d="M1 1v22l19-11z" fill="#6d97c4" stroke="#41648a" />
            </svg>
          </div>
        </div>
        <div className="mt-[16px] flex items-center">
          <span className="w-[95px]">Preview:</span>
          <span className="tracking-normal">9.780150929418776</span>
        </div>
      </div>
      <Splitter w="w-[46px]" />
      <div className="flex w-[277px] flex-col">
        <div className="flex gap-[14px]">
          <div className="flex h-[42px] w-[106px] items-center rounded-[4px] border-2 border-[#b4b4b4] bg-white pl-[15px] text-[#8a8a8a]">
            <svg width="24" height="26" viewBox="0 0 24 26" className="shrink-0">
              <circle cx="10" cy="10" r="8" fill="none" stroke="#777" strokeWidth="2" />
              <path d="M15 16l7 8" stroke="#777" strokeWidth="2.5" />
            </svg>
            <span className="ml-[9px] whitespace-nowrap">Se...</span>
          </div>
          <div className="flex h-[42px] w-[158px] items-center justify-center rounded-[4px] border-2 border-[#cfcfcf] bg-gradient-to-b from-[#fafafa] to-[#ececec] text-[#8a8a8a]">
            Show Help
          </div>
        </div>
        <div className="mt-[14px] flex h-[547px] overflow-hidden border-2 border-[#cfcfcf] bg-white">
          <div className="flex-1 overflow-hidden">
            {FN_TOP.map((f) => (
              <div key={f} className="flex h-[28px] items-center pl-[45px] text-[22.7px] font-bold leading-none">
                {f}
              </div>
            ))}
            {FN_GROUPS.map((g) => (
              <div key={g} className="flex h-[28px] items-center">
                <div className="flex w-[39px] items-center justify-center">
                  <svg width="10" height="16" viewBox="0 0 10 16">
                    <path d="M1 0l8 8-8 8z" fill="#555" />
                  </svg>
                </div>
                <div className="flex h-full flex-1 items-center bg-[#c0c0c0] pl-[6px]">{g}</div>
              </div>
            ))}
          </div>
          <div className="flex w-[28px] shrink-0 flex-col border-l border-[#d8d8d8] bg-gradient-to-r from-[#fafafa] to-[#f0f0f0]">
            <ScrollBtn dir="u" className="h-[27px] border-b-2 border-[#c6c6c6]" />
            <div className="h-[322px]" />
            <div className="flex-1 border-t-2 border-[#c6c6c6] bg-[#e2e2e2]" />
            <ScrollBtn dir="d" className="h-[28px] border-t-2 border-[#c6c6c6]" />
          </div>
        </div>
      </div>
      <Splitter w="w-[29px] pr-[14px]" />
      <div className="h-[604px] w-[481px] border-2 border-[#cfcfcf] bg-white" />
    </div>
    <div className="mt-auto flex justify-end gap-[13px] pb-[22px] pr-[23px]">
      <Btn label="OK" className="!border-[#4aa3e8] !from-[#f8fbfd] !to-[#e3eaf0]" />
      <Btn label="Cancel" />
      <Btn label="Apply" />
      <Btn label="Help" />
    </div>
  </div>
);

const QgisLogo = () => (
  <svg width="32" height="32" viewBox="0 0 32 32" className="shrink-0">
    <path d="M16 1a14 14 0 0 0-5 27l3-7a7 7 0 1 1 6-1l3 7A14 14 0 0 0 16 1z" fill="#75b23a" />
    <path d="M18 22l5 9h7l-8-11z" fill="#589632" />
    <path d="M12 11l8 2-3 8z" fill="#ee7913" />
  </svg>
);

export default function App() {
  return (
    <div className="relative flex h-[1504px] w-[2560px] flex-col overflow-hidden bg-[#f0f0f0] font-['Noto_Sans',sans-serif] text-[21px] leading-[26px] tracking-[-0.3px] text-[#1a1a1a]">
      {/* title bar */}
      <div className="flex h-[45px] shrink-0 items-center bg-[#f3f3f3] pl-[3px] text-[#858585]">
        <QgisLogo />
        <span className="ml-[3px] flex-1 text-[23.5px]">QGIS_M01A06 — QGIS</span>
        <svg width="20" height="2" viewBox="0 0 20 2" className="mr-[71px]">
          <rect width="20" height="2" fill="#8a8a8a" />
        </svg>
        <svg width="20" height="20" viewBox="0 0 20 20" className="mr-[72px]">
          <rect x="2" y="5" width="13" height="14" rx="2" fill="none" stroke="#8a8a8a" strokeWidth="1.6" />
          <path d="M6 2h8a4 4 0 0 1 4 4v9" fill="none" stroke="#8a8a8a" strokeWidth="1.6" />
        </svg>
        <svg width="22" height="22" viewBox="0 0 22 22" className="mr-[39px]">
          <path d="M1 1l20 20M21 1L1 21" stroke="#8a8a8a" strokeWidth="1.6" />
        </svg>
      </div>

      {/* menu bar */}
      <div className="flex h-[35px] shrink-0 items-center border-b-2 border-[#d6d6d6] bg-[#f0f0f0] pl-[8px] text-[#808080]">
        {MENUS.map((m) => (
          <span key={m} className="px-[14.4px]">
            <u>{m[0]}</u>
            {m.slice(1)}
          </span>
        ))}
      </div>

      {/* toolbars */}
      <div className={toolbarCls}>
        <Handle className="w-[25px]" />
        <Slot><IconNew /></Slot>
        <Slot><IconOpen /></Slot>
        <Slot><IconSave /></Slot>
        <Slot><IconPrint /></Slot>
        <Slot><IconLayoutMgr /></Slot>
        <Slot><IconStyle /></Slot>
        <Handle className="w-[32px] pl-[10px]" />
        <Slot><IconHand /></Slot>
        <Slot><IconPan /></Slot>
        <Slot><IconZoomIn /></Slot>
        <Slot><IconZoomOut /></Slot>
        <Slot><IconZoomFull /></Slot>
        <Slot w="w-[60px]"><IconZoomSel /></Slot>
        <div className="ml-auto mr-[27px] flex items-center">
          <Slot w="w-[60px]"><IconTableView /></Slot>
          <Slot w="w-[28px]"><Caret /></Slot>
          <Slot w="w-[61px]"><IconMeasure /></Slot>
          <Slot w="w-[28px]"><Caret /></Slot>
          <div className="ml-[2px] flex h-[62px] w-[62px] items-center justify-center rounded-[5px] border-2 border-[#bcbcbc] bg-[#dcdcdc]">
            <IconBubble />
          </div>
          <Slot w="w-[62px]"><IconGear /></Slot>
          <div className="ml-[2px]">
            <Slot w="w-[28px]"><Caret /></Slot>
          </div>
        </div>
      </div>

      <div className={toolbarCls}>
        <Handle className="w-[25px]" />
        <Slot><IconAddLayers /></Slot>
        <Slot><IconGeoPkg /></Slot>
        <Slot><IconVector /></Slot>
        <Slot><IconFeather /></Slot>
        <Slot><IconChip /></Slot>
        <Slot><IconMesh /></Slot>
        <Slot w="w-[64px]"><IconVBox /></Slot>
        <Handle className="w-[36px] pr-[4px]" />
        <Slot w="w-[64px]">
          <div className="relative">
            <IconPencils />
            <div className="absolute -right-[9px] bottom-0"><Caret w={11} /></div>
          </div>
        </Slot>
        <div className="ml-[2px] flex h-[60px] w-[63px] shrink-0 items-center justify-center rounded-[5px] border-2 border-[#bcbcbc] bg-[#dcdcdc]">
          <IconPencil />
        </div>
        <Slot w="w-[66px]"><IconSaveEdit /></Slot>
        <Slot w="w-[62px]"><IconPolyOff /></Slot>
        <Slot w="w-[30px]"><Caret c="#aaa" /></Slot>
        <div className="ml-auto mr-[10px] flex items-center">
          <Handle className="w-[20px]" />
          <div className="ml-[15px]"><IconHelp /></div>
          <Handle className="ml-[24px] w-[20px]" />
        </div>
      </div>

      <div className={toolbarCls}>
        <Handle className="w-[25px]" />
        <Slot><IconRuler /></Slot>
        <Slot w="w-[58px]"><IconVertex /></Slot>
        <Slot w="w-[32px]"><Caret /></Slot>
        <Slot><IconRotate /></Slot>
        <Slot><IconScale /></Slot>
        <Slot><IconOffset /></Slot>
        <Slot><IconFill off /></Slot>
        <Slot><IconFill /></Slot>
        <Slot><IconFill off /></Slot>
        <Slot><IconDelOff off /></Slot>
        <Slot><IconDelOff /></Slot>
        <Slot><IconSplit /></Slot>
        <Slot><IconRing /></Slot>
      </div>

      <div className={`${toolbarCls} h-[77px]`}>
        <Handle className="w-[25px]" />
        <Slot><IconMagnet /></Slot>
        <Slot>
          <div className="relative">
            <IconTraceOff />
            <div className="absolute -right-[6px] bottom-0"><Caret c="#aaa" w={11} /></div>
          </div>
        </Slot>
        <div className="relative flex h-[62px] w-[63px] shrink-0 items-center justify-center rounded-[5px] border-2 border-[#d0d0d0] bg-[#dfdfdf]">
          <IconSnapOff />
          <div className="absolute bottom-[6px] right-[6px]"><Caret c="#999" w={11} /></div>
        </div>
        <div className="ml-[4px] shrink-0 text-[#8a8a8a]">
          <Spin value="5" w="w-[166px]" grey />
        </div>
        <div className="ml-[3px] flex h-[43px] w-[177px] shrink-0 items-center rounded-[4px] border-2 border-[#c6c6c6] bg-[#f3f3f3] pl-[8px] pr-[15px] text-[#8a8a8a]">
          <span className="flex-1">px</span>
          <Caret c="#a0a0a0" w={15} />
        </div>
        <Slot w="w-[62px]"><IconTripleLine /></Slot>
        <Slot w="w-[80px]">
          <div className="relative">
            <IconReshape />
            <div className="absolute -right-[6px] bottom-0"><Caret c="#444" w={11} /></div>
          </div>
        </Slot>
        <Slot w="w-[58px]"><IconCrossOff /></Slot>
        <Slot w="w-[74px]"><IconMergeOff /></Slot>
      </div>

      {/* main area */}
      <div className="flex min-h-0 flex-1">
        {/* layers dock */}
        <div className="flex w-[587px] shrink-0 flex-col pb-[8px]">
          <div className="flex h-[44px] shrink-0 items-center justify-between pl-[8px] pr-[4px]">
            <span>Layers</span>
            <FloatClose />
          </div>
          <div className="flex h-[60px] shrink-0 items-center pb-[6px] pl-[7px]">
            <Slot w="w-[50px]">
              <svg width="34" height="36" viewBox="0 0 34 36">
                <path d="M22 12L31 1l3 3-8 11z" fill="#8a6a3a" />
                <path d="M3 18l16-8 9 10-6 14z" fill="#e9bb62" />
                <path d="M3 18l8-4 5 14-4 2z" fill="#d44040" />
                <path d="M6 12l10-4 1 6-9 4z" fill="#6d97c4" />
              </svg>
            </Slot>
            <Slot w="w-[50px]">
              <Ico size={40}>
                <path d="M14 6h16v32H14zM6 16v28h24" fill="none" stroke="#777" strokeWidth="2.5" />
                <path d="M20 12v20h6V4h-4" fill="none" stroke="#41648a" strokeWidth="2" />
                <circle cx="37" cy="37" r="9" fill="#6ea86e" />
                <path d="M37 31v12M31 37h12" stroke="#fff" strokeWidth="3" />
              </Ico>
            </Slot>
            <Slot w="w-[50px]">
              <div className="relative">
                <Ico size={38}>
                  <path d="M2 24c10-16 32-16 44 0-12 16-34 16-44 0z" fill="#e6e6e6" stroke="#888" strokeWidth="2" />
                  <circle cx="24" cy="24" r="11" fill="#6d97c4" stroke="#2f4a68" strokeWidth="2" />
                  <circle cx="24" cy="24" r="4" fill="#1e3044" />
                </Ico>
                <div className="absolute -right-[6px] bottom-0"><Caret w={11} /></div>
              </div>
            </Slot>
            <Slot w="w-[50px]">
              <div className="relative">
                <Ico size={40}>
                  <path d="M2 2h44v6L30 26v20l-12-6V26L2 8z" fill="#a9c5e3" stroke="#41648a" strokeWidth="2" />
                  <rect x="3" y="3" width="42" height="8" fill="#f5d93f" />
                </Ico>
                <div className="absolute -right-[6px] bottom-0"><Caret w={11} /></div>
              </div>
            </Slot>
            <Slot w="w-[50px]">
              <svg width="38" height="42" viewBox="0 0 38 42">
                <text x="0" y="24" fontSize="30" fill="#6d4f9e" fontFamily="Noto Sans, sans-serif">ε</text>
                <path d="M16 24h20l-3 16h-4l-2-10-2 10h-5z" fill="#c4c4c4" stroke="#888" />
              </svg>
            </Slot>
            <Slot w="w-[20px]"><Caret w={15} /></Slot>
            <div className="ml-[4px]">
              <Slot w="w-[50px]">
                <svg width="36" height="44" viewBox="0 0 36 44">
                  <path d="M3 2h10M3 2v40M3 42h10" fill="none" stroke="#888" strokeWidth="2" />
                  <rect x="8" y="12" width="8" height="8" fill="#f0a53c" />
                  <rect x="8" y="26" width="8" height="8" fill="#f0a53c" />
                  <path d="M21 2h10v24h5L26 42 16 26h5z" fill="#6d97c4" stroke="#41648a" />
                </svg>
              </Slot>
            </div>
            <Slot w="w-[50px]">
              <svg width="36" height="44" viewBox="0 0 36 44">
                <path d="M3 2h10M3 2v40M3 42h10" fill="none" stroke="#888" strokeWidth="2" />
                <rect x="8" y="12" width="8" height="8" fill="#f0a53c" />
                <rect x="8" y="26" width="8" height="8" fill="#f0a53c" />
                <path d="M21 42h10V18h5L26 2 16 18h5z" fill="#6d97c4" stroke="#41648a" />
              </svg>
            </Slot>
            <Slot w="w-[49px]">
              <svg width="32" height="44" viewBox="0 0 32 44">
                <rect x="2" y="2" width="23" height="32" fill="#fff" stroke="#888" strokeWidth="2" />
                <circle cx="24" cy="34" r="9" fill="#e0545c" />
                <path d="M19 34h10" stroke="#fff" strokeWidth="3" />
              </svg>
            </Slot>
          </div>
          <div className="min-h-0 flex-1 overflow-hidden border-2 border-[#cfcfcf] bg-white">
            {LAYERS.map((l) => (
              <div key={l.name} className={`relative flex h-[32.5px] items-center pl-[47px] ${l.active ? "bg-[#f0f0f0]" : ""}`}>
                <CheckBox on={l.checked} />
                <div className="relative ml-[12px] flex h-[20px] w-[34px] shrink-0 items-center">
                  <div className="h-[2.5px] w-full" style={{ backgroundColor: l.color }} />
                  {l.active && (
                    <svg width="22" height="26" viewBox="0 0 22 26" className="absolute left-[9px] top-[-3px]">
                      <path d="M14 2l6 4-10 16-8 3 1-8z" fill="#e2762e" stroke="#c8c8c8" />
                    </svg>
                  )}
                </div>
                <span className={`ml-[10px] whitespace-nowrap ${l.cls}`}>{l.name}</span>
                {l.badge && (
                  <div className="absolute left-[547px] top-[2px] flex h-[28px] w-[28px] items-center justify-center rounded-[4px] border border-[#d8d8d8] bg-[#f0f0f0] text-[22px] font-bold text-[#777]">
                    ?
                  </div>
                )}
              </div>
            ))}
            <div className="flex h-[32.5px] items-center pl-[14px]">
              <Caret c="#555" w={16} />
              <div className="ml-[17px]"><CheckBox on /></div>
              <svg width="26" height="26" viewBox="0 0 4 4" className="ml-[16px] shrink-0">
                <rect width="4" height="4" fill="#a9c5e3" />
                <rect x="0" y="0" width="1" height="1" fill="#1e3044" />
                <rect x="2" y="0" width="1" height="1" fill="#1e3044" />
                <rect x="1" y="1" width="1" height="1" fill="#1e3044" />
                <rect x="0" y="2" width="1" height="1" fill="#1e3044" />
                <rect x="3" y="1" width="1" height="1" fill="#1e3044" />
                <rect x="1" y="3" width="1" height="1" fill="#1e3044" />
              </svg>
              <span className="ml-[13px] text-[22.7px] font-bold">Google Satellite</span>
            </div>
          </div>
          <div className="flex h-[28px] shrink-0 border-x-2 border-b-2 border-[#cfcfcf] bg-gradient-to-b from-[#fcfcfc] to-[#f0f0f0]">
            <ScrollBtn dir="l" className="w-[26px] border-r-2 border-[#c6c6c6]" />
            <div className="w-[460px]" />
            <div className="flex-1 bg-[#e2e2e2]" />
            <ScrollBtn dir="r" className="w-[24px] border-l-2 border-[#c6c6c6]" />
          </div>
        </div>

        {/* map + attribute table */}
        <div className="ml-[13px] flex w-[1375px] shrink-0 flex-col pt-[4px]">
          <div className="flex h-[515px] shrink-0 border-2 border-[#cfcfcf] bg-white">
            <SatelliteMap />
          </div>
          <div className="flex h-[54px] shrink-0 items-center pl-[14px] pt-[14px]">RASMapper_XSCutlinesNatural3116 :: Features Total: 5</div>
          <div className="mt-[6px] flex h-[45px] shrink-0 items-center pl-[7px]">
            <div className="flex h-[45px] w-[47px] items-center justify-center rounded-[4px] border-2 border-[#bcbcbc] bg-[#dcdcdc]">
              <IconPencil size={36} />
            </div>
            <div className="ml-[7px] flex w-[48px] justify-center">
              <svg width="32" height="32" viewBox="0 0 32 32">
                <rect x="2" y="6" width="24" height="20" fill="#f5d93f" stroke="#a08a10" />
                <path d="M2 12h24M2 19h24" stroke="#a08a10" strokeWidth="2" />
                <path d="M26 1l4 3-13 20-6 4 1-7z" fill="#e2762e" stroke="#555" />
              </svg>
            </div>
            <div className="flex w-[49px] justify-center">
              <div className="bg-[#f5e96a]"><IconSave size={32} /></div>
            </div>
            <div className="flex w-[48px] justify-center opacity-25">
              <svg width="32" height="32" viewBox="0 0 32 32">
                <path d="M4 14a13 13 0 0 1 22-6l4-3v10H20l3-3a8 8 0 0 0-14 3zM28 18a13 13 0 0 1-22 6l-4 3V17h10l-3 3a8 8 0 0 0 14-3z" fill="#777" />
              </svg>
            </div>
          </div>
          <div className="ml-[7px] mt-[12px] flex h-[46px] w-[217px] shrink-0 items-center rounded-[4px] border-2 border-[#b4b4b4] bg-gradient-to-b from-white to-[#efefef] pl-[10px] pr-[14px]">
            <span className="text-[19px] font-bold text-[#555]">1.2</span>
            <span className="ml-[12px] flex-1">Shape_Leng</span>
            <Caret w={15} />
          </div>
          <div className="mt-[7px] flex h-[307px] shrink-0 overflow-hidden border-2 border-[#cfcfcf] bg-white">
            <div className="min-w-0 flex-1 overflow-hidden tracking-normal">
              <div className="grid h-[35px] w-[1034px] grid-cols-[34px_200px_200px_200px_200px_200px] border-b-2 border-[#cfcfcf] bg-gradient-to-b from-[#fbfbfb] to-[#efefef] tracking-[-0.3px]">
                <div />
                {["Shape_Leng", "X", "Y", "Latdd", "Londd"].map((h) => (
                  <div key={h} className="flex items-center justify-center">
                    {h}
                  </div>
                ))}
              </div>
              {TABLE_ROWS.map((r, i) => (
                <div
                  key={r[0]}
                  className={`grid h-[60px] w-[1034px] grid-cols-[34px_200px_200px_200px_200px_200px] border-b-2 border-[#d8d8d8] ${
                    i % 2 === 1 ? "bg-[#eae8e5]" : "bg-white"
                  }`}
                >
                  <div className="flex items-center border-r-2 border-[#cfcfcf] bg-gradient-to-b from-[#fbfbfb] to-[#ececec] pl-[5px] pt-[6px]">
                    {r[0]}
                  </div>
                  <div className={`flex items-center overflow-hidden whitespace-nowrap border-r border-[#d8d8d8] pb-[2px] ${i === 4 ? "pl-[14px]" : "pl-[19px]"}`}>{r[1]}</div>
                  <div className="flex items-center overflow-hidden whitespace-nowrap border-r border-[#d8d8d8] pb-[2px] pl-[13px]">{r[2]}</div>
                  <div className="flex items-center overflow-hidden whitespace-nowrap border-r border-[#d8d8d8] pb-[2px] pl-[13px]">{r[3]}</div>
                  <div className="flex items-center justify-end overflow-hidden whitespace-nowrap border-r border-[#d8d8d8] pb-[2px] pr-[6px]">{r[4]}</div>
                  <div className="flex items-center justify-end overflow-hidden whitespace-nowrap border-r border-[#d8d8d8] pb-[2px] pr-[6px]">{r[5]}</div>
                </div>
              ))}
            </div>
            <div className="flex w-[26px] shrink-0 flex-col border-l border-[#d8d8d8] bg-[#f4f4f4]">
              <div className="flex-1 bg-[#e2e2e2]" />
              <ScrollBtn dir="d" className="h-[27px] border-t-2 border-[#c6c6c6]" />
            </div>
          </div>
          <div className="mt-[10px] flex h-[44px] shrink-0 items-center pr-[6px]">
            <div className="relative ml-[7px] flex h-[44px] w-[240px] items-center rounded-[4px] border-2 border-[#b4b4b4] bg-gradient-to-b from-[#fbfbfb] to-[#efefef] pl-[6px]">
              <IconTableView size={30} />
              <span className="ml-[3px] whitespace-nowrap tracking-[-0.1px]">Show All Features</span>
              <div className="absolute bottom-[4px] right-[4px]"><Caret w={11} /></div>
            </div>
            <div className="ml-auto flex items-center">
              <Ico size={30}>
                <rect x="8" y="2" width="32" height="44" fill="#d9e6f3" stroke="#6d97c4" strokeWidth="2" />
                <rect x="18" y="10" width="16" height="12" fill="#fff" stroke="#6d97c4" strokeWidth="2" />
                <rect x="18" y="28" width="16" height="12" fill="#fff" stroke="#6d97c4" strokeWidth="2" />
                <rect x="10" y="13" width="5" height="5" fill="#41648a" />
                <rect x="10" y="31" width="5" height="5" fill="#41648a" />
              </Ico>
              <div className="ml-[9px] flex h-[46px] w-[47px] items-center justify-center rounded-[5px] border-2 border-[#bcbcbc] bg-[#dcdcdc]">
                <IconTableView size={34} />
              </div>
            </div>
          </div>
        </div>

        {/* browser dock */}
        <div className="ml-[13px] flex min-w-0 flex-1 flex-col pr-[2px]">
          <div className="flex h-[44px] shrink-0 items-center justify-end">
            <FloatClose />
          </div>
          <div className="flex h-[59px] shrink-0 items-center pb-[3px] pl-[218px]">
            <svg width="28" height="28" viewBox="0 0 28 28">
              <circle cx="14" cy="14" r="13" fill="#6d97c4" stroke="#41648a" />
              <text x="10" y="22" fontSize="20" fontStyle="italic" fontWeight="700" fill="#fff" fontFamily="Liberation Serif, serif">i</text>
            </svg>
          </div>
          <div className="flex h-[874px] shrink-0 overflow-hidden border-2 border-b-0 border-[#cfcfcf] bg-white">
            <div className="min-w-0 flex-1 overflow-hidden">
              {BROWSER_ROWS.map((n) => (
                <div key={n} className={`flex h-[36px] items-center pl-[73px] ${n === "Google Satellite" ? "bg-[#f0f0f0]" : ""}`}>
                  <GridTile />
                  <span className="ml-[12px] whitespace-nowrap">{n}</span>
                </div>
              ))}
            </div>
            <div className="flex w-[27px] shrink-0 flex-col border-l border-[#d8d8d8] bg-[#e2e2e2]">
              <ScrollBtn dir="u" className="h-[27px] border-b-2 border-[#c6c6c6] bg-[#f8f8f8]" />
              <div className="h-[484px]" />
              <div className="h-[86px] border-b-2 border-[#c6c6c6] bg-gradient-to-r from-[#fafafa] to-[#f0f0f0]" />
              <div className="flex-1" />
              <ScrollBtn dir="d" className="h-[28px] border-t-2 border-[#c6c6c6] bg-[#f8f8f8]" />
            </div>
          </div>
          <div className="flex h-[28px] shrink-0 border-2 border-[#cfcfcf] bg-gradient-to-b from-[#fcfcfc] to-[#f0f0f0]">
            <ScrollBtn dir="l" className="w-[26px] border-r-2 border-[#c6c6c6]" />
            <div className="w-[316px]" />
            <div className="flex-1 bg-[#e2e2e2]" />
            <ScrollBtn dir="r" className="w-[26px] border-l-2 border-[#c6c6c6]" />
            <div className="w-[25px] bg-[#f4f4f4]" />
          </div>
          <div className="flex h-[47px] shrink-0 items-start pt-[3px]">
            <div className="flex h-[47px] w-[129px] items-center justify-center rounded-b-[4px] border-x-2 border-b-2 border-[#cfcfcf] bg-[#f6f6f6] pt-[4px]">
              Browser
            </div>
            <div className="flex h-[42px] w-[233px] items-center justify-center whitespace-nowrap rounded-br-[4px] border-b-2 border-r-2 border-[#cfcfcf] bg-[#e3e3e3]">
              Processing Toolbox
            </div>
          </div>
        </div>
      </div>

      {/* status bar */}
      <div className="flex h-[49px] shrink-0 items-start whitespace-nowrap pt-[1px]">
        <div className="ml-[8px] flex h-[43px] w-[398px] shrink-0 items-center rounded-[4px] border-2 border-[#b4b4b4] bg-white pl-[16px] text-[#8a8a8a]">
          <svg width="26" height="28" viewBox="0 0 26 28" className="shrink-0">
            <circle cx="11" cy="11" r="9" fill="none" stroke="#999" strokeWidth="2" />
            <path d="M16 18l7 9" stroke="#999" strokeWidth="3" />
          </svg>
          <span className="ml-[13px]">Type to locate (Ctrl+K)</span>
        </div>
        <div className="ml-[19px] flex h-[43px] w-[503px] shrink-0 items-center overflow-hidden">0 features selected on layer RASMapper_XSCutlinesNatural3116</div>
        <div className="ml-[18px] flex h-[43px] w-[112px] shrink-0 items-center">Coordinate</div>
        <div className="flex h-[43px] w-[214px] shrink-0 items-center rounded-[4px] border-2 border-[#b4b4b4] bg-white pl-[13px]">1572369, 1078443</div>
        <div className="flex h-[43px] w-[46px] shrink-0 items-center justify-center">
          <svg width="32" height="34" viewBox="0 0 32 34">
            <circle cx="14" cy="12" r="8" fill="none" stroke="#444" strokeWidth="3" />
            <circle cx="16" cy="24" r="7" fill="none" stroke="#444" strokeWidth="3" />
            <path d="M22 2l-12 30M26 4l3 1" stroke="#444" strokeWidth="2" />
          </svg>
        </div>
        <div className="ml-[21px] flex h-[43px] w-[58px] shrink-0 items-center">Scale</div>
        <div className="flex h-[43px] w-[160px] shrink-0 items-center rounded-[4px] border-2 border-[#b4b4b4] bg-white pl-[5px]">
          <span className="flex-1">1:32000</span>
          <div className="flex h-full w-[40px] items-center justify-center border-l border-[#ccc] bg-[#f6f6f6]">
            <Caret w={15} />
          </div>
        </div>
        <div className="ml-[26px] flex h-[43px] w-[40px] shrink-0 items-center">
          <svg width="26" height="36" viewBox="0 0 26 36">
            <path d="M6 16V9a7 7 0 0 1 14 0v7" fill="none" stroke="#8a8a8a" strokeWidth="3" />
            <rect x="2" y="15" width="22" height="20" rx="2" fill="#6e6e6e" />
          </svg>
        </div>
        <div className="ml-[2px] flex h-[43px] w-[96px] shrink-0 items-center">Magnifier</div>
        <Spin value="100%" w="w-[166px]" h="h-[43px]" />
        <div className="ml-[20px] flex h-[43px] w-[100px] shrink-0 items-center">Rotation</div>
        <Spin value="0.0 °" w="w-[166px]" h="h-[43px]" />
        <div className="ml-[14px] flex h-[43px] items-center">
          <CheckBox on />
        </div>
        <div className="ml-[11px] flex h-[43px] w-[100px] shrink-0 items-center">Render</div>
        <div className="flex h-[43px] w-[28px] shrink-0 items-center">
          <svg width="26" height="34" viewBox="0 0 26 34">
            <ellipse cx="13" cy="17" rx="12" ry="15" fill="none" stroke="#666" strokeWidth="2" />
            <ellipse cx="13" cy="17" rx="6" ry="15" fill="none" stroke="#666" strokeWidth="2" />
            <path d="M1 12h24M1 22h24M13 2v30" stroke="#666" strokeWidth="2" />
          </svg>
        </div>
        <div className="ml-[6px] flex h-[43px] w-[120px] shrink-0 items-center">EPSG:3116</div>
        <div className="ml-[32px] flex h-[43px] items-center">
          <svg width="32" height="36" viewBox="0 0 32 36">
            <path d="M16 1C7 1 1 7 1 15s6 14 14 14c2 0 3 0 4 3l3 3c1-3 1-6 1-8 5-3 8-7 8-12C31 7 25 1 16 1z" fill="#6e6e6e" />
            <circle cx="9" cy="15" r="2" fill="#fff" />
            <circle cx="16" cy="15" r="2" fill="#fff" />
            <circle cx="23" cy="15" r="2" fill="#fff" />
          </svg>
        </div>
      </div>

      <FieldCalculator />
    </div>
  );
}
